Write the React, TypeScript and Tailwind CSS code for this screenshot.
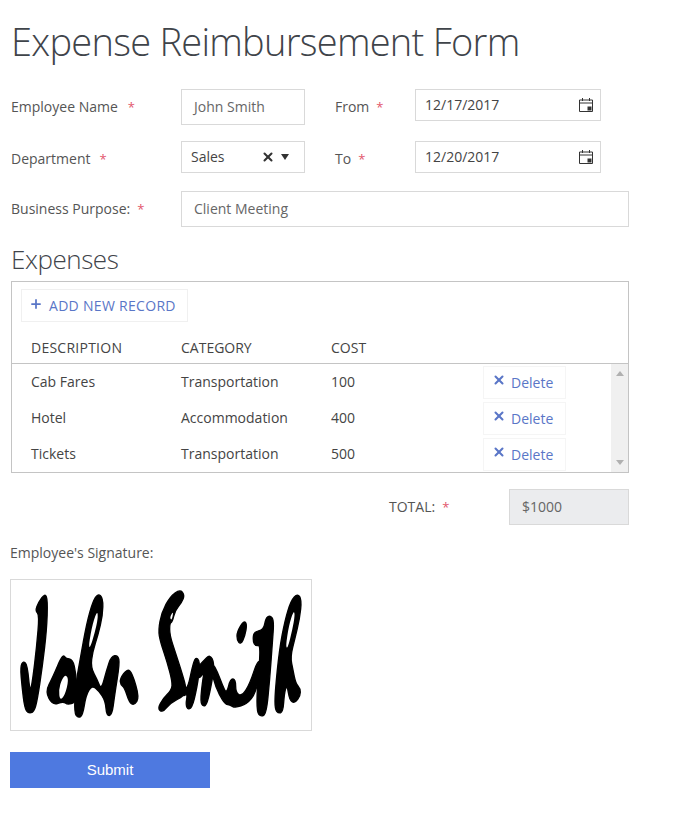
import { Plus, X } from 'lucide-react'

const rows = [
  { description: 'Cab Fares', category: 'Transportation', cost: '100' },
  { description: 'Hotel', category: 'Accommodation', cost: '400' },
  { description: 'Tickets', category: 'Transportation', cost: '500' },
]

// signature ink outlines, in 3x page pixels
const johnInk = [
  [[105, 40], [113, 60], [110, 150], [97, 260], [82, 360], [72, 396], [55, 400], [44, 385], [36, 320], [31, 260], [40, 243], [52, 255], [60, 340], [68, 300], [80, 200], [88, 104], [76, 92], [85, 68]],
  [[158, 222], [168, 236], [188, 238], [198, 280], [200, 340], [196, 368], [172, 374], [160, 364], [128, 376], [106, 335], [128, 292]],
  [[264, 40], [279, 55], [278, 105], [264, 165], [248, 215], [242, 262], [262, 300], [274, 330], [290, 270], [304, 228], [324, 226], [329, 250], [314, 345], [306, 406], [290, 408], [286, 362], [266, 332], [246, 316], [228, 345], [218, 407], [204, 414], [193, 398], [196, 320], [210, 240], [230, 130], [248, 66]],
  [[330, 296], [352, 266], [367, 280], [388, 352], [373, 376], [358, 368], [344, 324], [332, 314]],
]
const johnHoles = [
  [[156, 296], [146, 330], [150, 362], [165, 345], [176, 300], [168, 284]],
  [[262, 92], [248, 130], [236, 195], [240, 205], [254, 160], [264, 115]],
]
const smithInk = [
  [[75, 28], [89, 45], [80, 68], [60, 92], [52, 126], [44, 130], [44, 165], [62, 220], [82, 282], [94, 325], [88, 347], [45, 370], [22, 398], [8, 385], [24, 356], [50, 330], [52, 305], [36, 245], [16, 185], [10, 150], [20, 98], [45, 50]],
  [[122, 230], [135, 245], [130, 300], [114, 378], [100, 390], [92, 375], [98, 340], [84, 350], [88, 330], [100, 318], [112, 260]],
  [[125, 265], [145, 243], [165, 223], [178, 250], [172, 300], [157, 372], [145, 380], [136, 365], [143, 300], [148, 275], [130, 300]],
  [[172, 248], [187, 275], [202, 315], [215, 342], [226, 296], [242, 298], [242, 340], [262, 348], [285, 310], [308, 240], [322, 250], [302, 340], [276, 372], [240, 384], [224, 374], [212, 374], [193, 345], [173, 295]],
  [[266, 122], [276, 132], [270, 168], [257, 194], [246, 180], [246, 156]],
  [[345, 106], [357, 120], [352, 190], [344, 300], [334, 402], [318, 410], [306, 398], [306, 330], [318, 195], [302, 198], [294, 186], [296, 155], [326, 150], [332, 115]],
  [[428, 40], [440, 60], [434, 115], [420, 175], [406, 230], [414, 270], [422, 310], [436, 326], [436, 347], [420, 370], [404, 362], [396, 312], [388, 340], [384, 397], [370, 400], [360, 388], [360, 340], [373, 210], [390, 120], [408, 62]],
]
const smithHoles = [
  [[56, 92], [44, 112], [50, 122]],
  [[416, 92], [402, 135], [392, 200], [398, 205], [412, 150], [420, 105]],
]

// closed outline through edge midpoints, so the ink has soft corners
function smooth(points: number[][]) {
  const mid = (a: number[], b: number[]) => `${(a[0] + b[0]) / 2} ${(a[1] + b[1]) / 2}`
  let d = `M${mid(points[points.length - 1], points[0])}`
  points.forEach((p, i) => {
    d += `Q${p[0]} ${p[1]} ${mid(p, points[(i + 1) % points.length])}`
  })
  return d + 'Z'
}

function Signature() {
  return (
    <svg viewBox="11 580 300 150" className="h-full w-full" strokeLinejoin="round">
      <g transform="translate(10 580) scale(0.3333)">
        {johnInk.map((ink, i) => <path key={i} d={smooth(ink)} fill="#000" stroke="#000" strokeWidth="4" />)}
        {johnHoles.map((hole, i) => <path key={i} d={smooth(hole)} fill="#fff" />)}
      </g>
      <g transform="translate(155 580) scale(0.3333)">
        {smithInk.map((ink, i) => <path key={i} d={smooth(ink)} fill="#000" stroke="#000" strokeWidth="4" />)}
        {smithHoles.map((hole, i) => <path key={i} d={smooth(hole)} fill="#fff" />)}
      </g>
    </svg>
  )
}

function Required() {
  return <span className="text-[13px] text-[#e2566c]">*</span>
}

function CalendarIcon() {
  return (
    <svg width="16" height="16" viewBox="0 0 16 16" fill="none" className="text-[#333]">
      <path d="M1.5 3h13v11.5h-13zM1.5 6h13M4.5 1v3M11.5 1v3" stroke="currentColor" strokeWidth="1" />
      <rect x="9.5" y="9.5" width="4" height="4" fill="currentColor" />
    </svg>
  )
}

function DateField({ label, value }: { label: string; value: string }) {
  return (
    <div className="flex items-start">
      <div className="flex w-[80px] gap-[7px] pt-2">
        {label} <Required />
      </div>
      <div className="flex h-8 w-[186px] items-center justify-between border border-[#d9d9d9] pl-[9px] pr-[6px] text-[#444]">
        {value}
        <CalendarIcon />
      </div>
    </div>
  )
}

export default function App() {
  return (
    <div className="min-h-[825px] w-[695px] bg-white pl-[11px] pt-[15px] font-['Open_Sans',sans-serif] text-[14px] leading-5 text-[#555]">
      <h1 className="text-[38px] font-light leading-[52px] tracking-[-0.73px] text-[#3f444a]">Expense Reimbursement Form</h1>

      <div className="mt-[22px] flex w-[618px] flex-col">
        <div className="flex items-start">
          <div className="flex w-[170px] gap-[10px] pt-2">
            Employee Name <Required />
          </div>
          <div className="flex h-9 w-[124px] items-center border border-[#d9d9d9] pl-3 text-[#666]">John Smith</div>
          <div className="ml-[30px]">
            <DateField label="From" value="12/17/2017" />
          </div>
        </div>

        <div className="mt-4 flex items-start">
          <div className="flex w-[170px] gap-[9px] pt-2">
            Department <Required />
          </div>
          <div className="flex h-8 w-[124px] items-center justify-between border border-[#d9d9d9] pl-[9px] pr-[15px] text-[#444]">
            Sales
            <span className="flex items-center gap-[6px] text-[#333]">
              <X size={14} strokeWidth={3.5} />
              <span className="h-0 w-0 border-x-[4px] border-t-[6px] border-x-transparent border-t-[#333]" />
            </span>
          </div>
          <div className="ml-[30px]">
            <DateField label="To" value="12/20/2017" />
          </div>
        </div>

        <div className="mt-[18px] flex items-start">
          <div className="flex w-[170px] gap-[7px] pt-2">
            Business Purpose: <Required />
          </div>
          <div className="flex h-9 w-[448px] items-center border border-[#d9d9d9] pl-3 text-[#666]">Client Meeting</div>
        </div>
      </div>

      <h2 className="mt-[14px] text-[26px] font-light leading-9 tracking-[-0.45px] text-[#3f444a]">Expenses</h2>

      <div className="mt-[4px] w-[618px] border border-[#c4c4c4]">
        <div className="pl-[9px] pt-[7px]">
          <button className="flex h-[33px] w-[167px] items-center gap-[6px] border border-[#f0f0f0] pl-[7px] tracking-[0.3px] text-[#5a76c7]">
            <Plus size={14} strokeWidth={3} className="-mt-1" />
            ADD NEW RECORD
          </button>
        </div>
        <div className="grid h-[42px] grid-cols-[150px_150px_1fr] items-center border-b border-[#c4c4c4] pl-[19px] pt-[11px] text-[#444]">
          <span className="tracking-[0.25px]">DESCRIPTION</span>
          <span>CATEGORY</span>
          <span>COST</span>
        </div>
        <div className="flex h-[108px]">
          <div className="flex-1">
            {rows.map((row) => (
              <div key={row.description} className="grid h-9 grid-cols-[150px_150px_152px_1fr] items-center pl-[19px] text-[#444]">
                <span>{row.description}</span>
                <span>{row.category}</span>
                <span>{row.cost}</span>
                <button className="flex h-[33px] w-[83px] items-center gap-[5px] border border-[#f5f5f5] pl-[8px] text-[#5a76c7]">
                  <X size={14} strokeWidth={3.5} className="-mt-1" />
                  <span className="mt-[2px]">Delete</span>
                </button>
              </div>
            ))}
          </div>
          <div className="flex w-[17px] flex-col items-center justify-between bg-[#f0f0f0] py-[7px]">
            <span className="h-0 w-0 border-x-[4px] border-b-[5px] border-x-transparent border-b-[#b0b0b0]" />
            <span className="h-0 w-0 border-x-[4px] border-t-[5px] border-x-transparent border-t-[#b0b0b0]" />
          </div>
        </div>
      </div>

      <div className="mt-4 flex w-[618px] items-center justify-end">
        <span className="flex w-[120px] gap-[7px]">
          TOTAL: <Required />
        </span>
        <div className="flex h-9 w-[120px] items-center border border-[#d9d9d9] bg-[#ebecee] pl-3 text-[#666]">$1000</div>
      </div>

      <div className="-ml-px mt-[18px] text-[#555]">Employee's Signature:</div>
      <div className="-ml-px mt-4 h-[152px] w-[302px] border border-[#d9d9d9]">
        <Signature />
      </div>
      <button className="-ml-px mt-[21px] block h-9 w-[200px] bg-[#4e79e0] font-['Liberation_Sans',sans-serif] text-[15px] text-white">
        Submit
      </button>
    </div>
  )
}
